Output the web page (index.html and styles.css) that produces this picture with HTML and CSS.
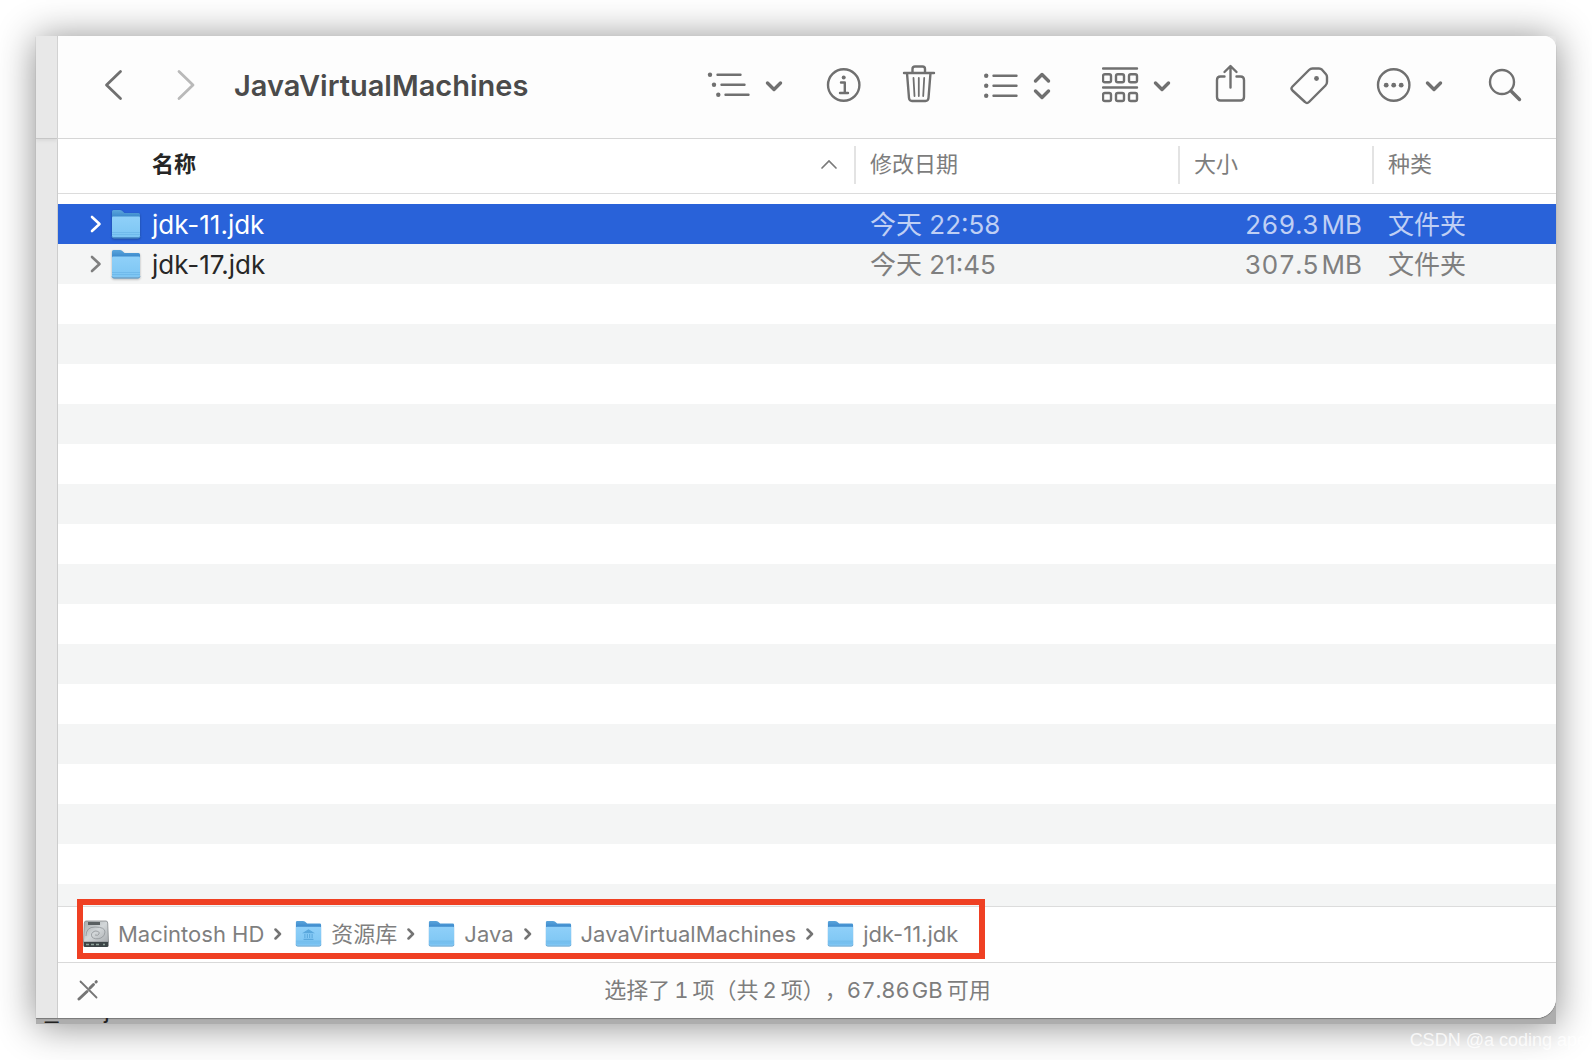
FILE: index.html
```html
<!DOCTYPE html>
<html lang="zh-CN">
<head>
<meta charset="utf-8">
<meta name="viewport" content="width=device-width, initial-scale=1">
<title>JavaVirtualMachines</title>
<link rel="stylesheet" href="styles.css">
</head>
<body>
<svg class="defs" aria-hidden="true">
  <defs>
    <linearGradient id="front" x1="0" y1="0" x2="0" y2="1">
      <stop offset="0" stop-color="#8fd0f9"/><stop offset="1" stop-color="#7cc5f3"/>
    </linearGradient>
    <linearGradient id="back" x1="0" y1="0" x2="0" y2=".35">
      <stop offset="0" stop-color="#5aa5dc"/><stop offset="1" stop-color="#3280c6"/>
    </linearGradient>
    <linearGradient id="metal" x1="0" y1="0" x2="1" y2="1">
      <stop offset="0" stop-color="#a4a9ab"/><stop offset=".5" stop-color="#d3d7d9"/><stop offset="1" stop-color="#a9adb0"/>
    </linearGradient>
    <symbol id="folder" viewBox="0 0 30 30">
      <path d="M1 27V2.500Q1 1 2.500 1H9Q10 1 11 1.800L13.500 4H27.500Q29 4 29 5.500V27Z" fill="url(#back)"/>
      <path d="M1 8.500Q1 7.500 2 7.500H28Q29 7.500 29 8.500V27Q29 28.500 27.500 28.500H2.500Q1 28.500 1 27Z" fill="url(#front)"/>
      <path d="M1 23.500H29M1 25.500H29" stroke="#68b4e6" stroke-width=".7"/>
      <path d="M1 27.500Q1.500 29 3 29H27Q28.500 29 29 27.500" fill="none" stroke="#4f97cc" stroke-width="1"/>
    </symbol>
    <symbol id="sep" viewBox="0 0 8 14">
      <path d="M1.500 2.500L6 7L1.500 11.500" fill="none" stroke="#747474" stroke-width="2.500" stroke-linecap="round" stroke-linejoin="round"/>
    </symbol>
    <symbol id="disclose" viewBox="0 0 12 20">
      <path d="M2 3L9.500 10L2 17" fill="none" stroke="currentColor" stroke-width="2.600" stroke-linecap="round" stroke-linejoin="round"/>
    </symbol>
  </defs>
</svg>

<div class="frame">
  <div class="shell">
    <aside class="sidebar"><div class="sidebar-top"></div></aside>
    <main class="finder">
      <header class="toolbar">
        <button class="tool nav" aria-label="后退"><svg width="24" height="48" viewBox="101 63 24 48"><path d="M120.500 71.500L106.500 85L120.500 98.500"/></svg></button>
        <button class="tool nav" aria-label="前进" disabled><svg width="24" height="48" viewBox="174 63 24 48"><path d="M179 71.500L193 85L179 98.500"/></svg></button>
        <h1 class="title">JavaVirtualMachines</h1>
        <div class="tools">
          <button class="tool" aria-label="缩进"><svg width="78" height="48" viewBox="706 63 78 48"><path d="M717.500 74.700H740.500M721.500 84.700H744.500M725.500 94.700H748.500"/><path class="bold" d="M767.500 83L774 89.500L780.500 83"/><g class="dot"><circle cx="710" cy="74.700" r="2.200"/><circle cx="714" cy="84.700" r="2.200"/><circle cx="718.300" cy="94.700" r="2.200"/></g></svg></button>
          <button class="tool" aria-label="简介"><svg width="46" height="48" viewBox="820 63 46 48"><circle cx="843.700" cy="85" r="15.700"/><path d="M841 82.500H844.800V92.700M840 93H848"/><circle class="dot" cx="843.700" cy="77.500" r="2"/></svg></button>
          <button class="tool" aria-label="删除"><svg width="34" height="48" viewBox="902 63 34 48"><path d="M904 73H934M912.500 72V69Q912.500 66.500 915 66.500H922.500Q925 66.500 925 69V72M907 73L909 98Q909.300 101 912 101H925.500Q928.200 101 928.500 98L930.500 73"/><path class="thin" d="M913.500 78L914.500 96M918.800 78V96M924.200 78L923.200 96"/></svg></button>
          <button class="tool" aria-label="列表"><svg width="94" height="48" viewBox="972 63 94 48"><path d="M993.500 75.700H1016.500M993.500 85.700H1016.500M993.500 95.700H1016.500"/><path class="bold" d="M1035.500 81L1042 74.500L1048.500 81M1035.500 91L1042 97.500L1048.500 91"/><g class="dot"><circle cx="986.200" cy="75.700" r="2.200"/><circle cx="986.200" cy="85.700" r="2.200"/><circle cx="986.200" cy="95.700" r="2.200"/></g></svg></button>
          <button class="tool" aria-label="分组"><svg width="70" height="48" viewBox="1102 63 70 48"><path d="M1103 68.500H1137M1103 87.500H1137"/><g><rect x="1103" y="74.200" width="8" height="8" rx="1.800"/><rect x="1116" y="74.200" width="8" height="8" rx="1.800"/><rect x="1129" y="74.200" width="8" height="8" rx="1.800"/><rect x="1103" y="93" width="8" height="8" rx="1.800"/><rect x="1116" y="93" width="8" height="8" rx="1.800"/><rect x="1129" y="93" width="8" height="8" rx="1.800"/></g><path class="bold" d="M1155.500 83L1162 89.500L1168.500 83"/></svg></button>
          <button class="tool" aria-label="共享"><svg width="44" height="48" viewBox="1208 63 44 48"><path d="M1224.500 76.500H1220.500Q1217 76.500 1217 80V97Q1217 100.500 1220.500 100.500H1240.500Q1244 100.500 1244 97V80Q1244 76.500 1240.500 76.500H1236.500M1230.500 87.500V66.500M1224.500 72L1230.500 66L1236.500 72"/></svg></button>
          <button class="tool" aria-label="标签"><svg width="42" height="48" viewBox="1288 63 42 48"><path d="M1292.500 86.500L1309 70Q1310.500 68.500 1312.500 68.500H1319Q1320.800 68.500 1322 69.700L1325.800 74Q1327 75.300 1327 77V82Q1327 84 1325.500 85.500L1309 102Q1307 104 1305 102L1292.500 90.500Q1290.500 88.500 1292.500 86.500Z"/><circle class="dot" cx="1316.500" cy="78.500" r="2.400"/></svg></button>
          <button class="tool" aria-label="操作"><svg width="80" height="48" viewBox="1366 63 80 48"><circle cx="1393.700" cy="85" r="15.700"/><path class="bold" d="M1427.500 83L1434 89.500L1440.500 83"/><g class="dot"><circle cx="1386.200" cy="85.200" r="2.400"/><circle cx="1393.700" cy="85.200" r="2.400"/><circle cx="1401.200" cy="85.200" r="2.400"/></g></svg></button>
          <button class="tool" aria-label="搜索"><svg width="42" height="48" viewBox="1482 63 42 48"><circle cx="1502" cy="82" r="12"/><path class="bold" d="M1511.500 91.500L1519.500 99.500"/></svg></button>
        </div>
      </header>

      <section class="listing">
        <table class="files">
          <colgroup><col><col class="c-date"><col class="c-size"><col class="c-kind"></colgroup>
          <thead>
            <tr>
              <th scope="col" class="name-head"><div class="head"><span>名称</span><svg width="18" height="12" viewBox="0 0 18 12" aria-hidden="true"><path d="M2 10L9 3L16 10" fill="none" stroke="#7a7a7a" stroke-width="1.700" stroke-linecap="round"/></svg></div></th>
              <th scope="col"><div class="head split">修改日期</div></th>
              <th scope="col"><div class="head split">大小</div></th>
              <th scope="col"><div class="head split">种类</div></th>
            </tr>
          </thead>
          <tbody>
            <tr class="gap"><td colspan="4"></td></tr>
            <tr class="row selected">
              <td><div class="file"><svg class="arrow" width="12" height="20" aria-hidden="true"><use href="#disclose"/></svg><svg class="folder" width="30" height="30" aria-hidden="true"><use href="#folder"/></svg><span>jdk-11.jdk</span></div></td>
              <td class="meta">今天 22:58</td><td class="meta size">269.3&#8202;MB</td><td class="meta">文件夹</td>
            </tr>
            <tr class="row">
              <td><div class="file"><svg class="arrow" width="12" height="20" aria-hidden="true"><use href="#disclose"/></svg><svg class="folder" width="30" height="30" aria-hidden="true"><use href="#folder"/></svg><span>jdk-17.jdk</span></div></td>
              <td class="meta">今天 21:45</td><td class="meta size">307.5&#8202;MB</td><td class="meta">文件夹</td>
            </tr>
          </tbody>
        </table>
      </section>

      <nav class="pathbar" aria-label="路径">
        <ol class="path">
          <li><svg width="26" height="28" viewBox="0 0 26 28" aria-hidden="true"><path d="M3 1H23Q24.500 1 24.700 3L25.500 22H.5L1.300 3Q1.500 1 3 1Z" fill="url(#metal)" stroke="#85898b" stroke-width=".8"/><path d="M.5 22H25.500V25.500Q25.500 27 24 27H2Q.5 27 .5 25.500Z" fill="#3d4547"/><path d="M3 24.500H6M8 24.500H11M13 24.500H16M20 24.500H22" stroke="#8fa39a" stroke-width="1.500"/><path d="M5 3.500H17" stroke="#5a5f61" stroke-width="3"/><path d="M3 16Q3 7 12 7Q22 7 22 12Q22 16 18 18Q12 20 9 17Q7 13 12 11Q17 11 16 14Q15 16 12 15" fill="none" stroke="#969b9e" stroke-width=".9"/></svg><span>Macintosh HD</span></li>
          <li><svg class="sep" width="8" height="14" aria-hidden="true"><use href="#sep"/></svg><svg width="27" height="27" viewBox="0 0 30 30" aria-hidden="true"><use href="#folder"/><path d="M10 14L15 11L20 14ZM11 15.500V20M13.700 15.500V20M16.300 15.500V20M19 15.500V20M9.500 21.500H20.500" fill="#5aa8dd" stroke="#5aa8dd" stroke-width="1.200"/></svg><span>资源库</span></li>
          <li><svg class="sep" width="8" height="14" aria-hidden="true"><use href="#sep"/></svg><svg width="27" height="27" aria-hidden="true"><use href="#folder"/></svg><span>Java</span></li>
          <li><svg class="sep" width="8" height="14" aria-hidden="true"><use href="#sep"/></svg><svg width="27" height="27" aria-hidden="true"><use href="#folder"/></svg><span>JavaVirtualMachines</span></li>
          <li><svg class="sep" width="8" height="14" aria-hidden="true"><use href="#sep"/></svg><svg width="27" height="27" aria-hidden="true"><use href="#folder"/></svg><span>jdk-11.jdk</span></li>
        </ol>
      </nav>

      <footer class="status">
        <svg width="22" height="22" viewBox="0 0 22 22" aria-hidden="true"><path d="M3.500 2.500L19.500 18.500" stroke="#757575" stroke-width="1.800" stroke-linecap="round"/><path d="M2 20L10 12.500" stroke="#757575" stroke-width="3" stroke-linecap="round"/><path d="M13 9L16.500 5.500M19 3L19.300 2.700" stroke="#757575" stroke-width="3" stroke-linecap="round"/></svg>
        <p>选择了&#8201;1&#8201;项（共&#8201;2&#8201;项），67.86&#8202;GB&#8201;可用</p>
      </footer>
    </main>
  </div>
  <div class="behind" aria-hidden="true"><span>_</span><span class="tail">j</span></div>
</div>
<p class="credit">CSDN @a coding ape</p>
</body>
</html>
```
FILE: styles.css
```css
* { box-sizing: border-box; }

body {
  margin: 0;
  min-height: 100vh;
  padding: 36px;
  display: flex;
  flex-direction: column;
  position: relative;
  overflow: hidden;
  background: #fff;
  color: #272727;
  font-family: Inter, "Noto Sans CJK SC", sans-serif;
}

.defs { position: absolute; width: 0; height: 0; }

.frame {
  flex: 1;
  display: flex;
  flex-direction: column;
  background: linear-gradient(#e4e4e4, #e4e4e4) top / 100% 50% no-repeat, #adadad;
  box-shadow: 0 2px 36px rgba(0, 0, 0, .46);
}

.shell {
  flex: 1;
  display: flex;
  overflow: hidden;
  border-radius: 0 12px 20px 0;
  box-shadow: 0 1px 1px #777;
}

.sidebar {
  width: 22px;
  background: #e8e8e8;
  border-right: 1px solid #cdcdcd;
}

.sidebar-top {
  height: 103px;
  border-bottom: 1px solid #c6c6c6;
  box-shadow: 0 2px 3px #dadada;
}

.finder {
  flex: 1;
  min-width: 0;
  display: flex;
  flex-direction: column;
  background: #fff;
}

.toolbar {
  height: 103px;
  padding: 0 32px 0 43px;
  display: flex;
  align-items: center;
  background: #fdfdfd;
  border-bottom: 1px solid #d6d6d6;
}

.tool {
  padding: 0;
  border: 0;
  background: none;
  color: #707070;
}

.tool svg {
  display: block;
  fill: none;
  stroke: currentColor;
  stroke-width: 2.4;
  stroke-linecap: round;
  stroke-linejoin: round;
}

.tool .bold { stroke-width: 3.4; }
.tool .thin { stroke-width: 1.8; }
.tool .dot { fill: currentColor; stroke: none; }
.tool.nav { margin-right: 49px; }
.tool.nav svg { stroke-width: 2.8; }
.tool.nav:disabled { margin-right: 36px; color: #b9b9b9; }

.title {
  margin: 0;
  padding-bottom: 2px;
  color: #4b4b4b;
  font-size: 29px;
  line-height: 36px;
  font-weight: 600;
}

.tools {
  margin-left: auto;
  display: flex;
  gap: 36px;
}

.listing {
  flex: 1;
  background:
    linear-gradient(#fff, #fff) 0 0 / 100% 65px no-repeat,
    linear-gradient(#fff 50%, #f4f5f5 50%) 0 65px / 100% 80px;
}

.files {
  width: 100%;
  table-layout: fixed;
  border-spacing: 0;
}

.c-date { width: 324px; }
.c-size { width: 194px; }
.c-kind { width: 184px; }

.files th {
  height: 55px;
  padding: 0 0 2px;
  border-bottom: 1px solid #dcdcdc;
  color: #7d7d7d;
  font-size: 22px;
  line-height: 34px;
  font-weight: 400;
  text-align: left;
}

.head {
  height: 38px;
  padding-bottom: 2px;
  display: flex;
  align-items: center;
}

.head.split {
  padding-left: 14px;
  border-left: 2px solid #e3e3e3;
}

.files .name-head { padding: 0 16px 2px 94px; color: #262626; font-weight: 700; }
.name-head .head { justify-content: space-between; }

.files td { padding: 0 0 0 16px; }
.files .gap td { height: 10px; padding: 0; }
.files .row { height: 40px; font-size: 26px; line-height: 38px; }
.files .row td { padding-top: 2px; }

.file { display: flex; align-items: center; padding-left: 16px; }
.arrow { color: #7f7f7f; margin-bottom: 2px; }
.folder { margin: 0 11px 2px 9px; filter: drop-shadow(0 1px 1px rgba(0, 0, 0, .3)); }
.meta { color: #7f7f7f; }
.files .row .size { padding: 2px 10px 0 0; text-align: right; font-variant-numeric: tabular-nums; }

.selected { background: #2962d9; color: #fff; }
.selected .arrow { color: #fff; }
.selected .meta { color: #bfcff4; }

.pathbar {
  height: 56px;
  padding-left: 19px;
  display: flex;
  align-items: center;
  border-top: 1px solid #dcdcdc;
}

.path {
  height: 60px;
  margin: -12px 0 0;
  padding: 10px 21px 0 0;
  display: flex;
  align-items: center;
  border: 6px solid #ef4023;
  list-style: none;
  color: #7f7f7f;
  font-size: 22px;
  line-height: 32px;
}

.path li { display: flex; align-items: center; gap: 9px; }
.path .sep { margin: 0 4px 0 10px; }

.status {
  height: 56px;
  padding: 0 60px 0 19px;
  display: flex;
  align-items: center;
  background: #fdfdfd;
  border-top: 1px solid #d9d9d9;
  color: #7d7d7d;
  font-size: 22px;
  line-height: 32px;
  font-variant-numeric: tabular-nums;
  text-spacing-trim: space-all;
}

.status svg, .status p { margin: 0 0 2px; }
.status p { flex: 1; text-align: center; }

.behind {
  height: 6px;
  padding-left: 9px;
  display: flex;
  align-items: flex-end;
  overflow: hidden;
  color: #222;
  font-family: "Liberation Sans", sans-serif;
  font-size: 24px;
  line-height: 28px;
}

.behind .tail { padding-left: 46px; }

.credit {
  position: absolute;
  right: 5px;
  bottom: 8px;
  margin: 0;
  color: rgba(255, 255, 255, .8);
  font-family: "Liberation Sans", sans-serif;
  font-size: 18px;
  line-height: 24px;
}
```
